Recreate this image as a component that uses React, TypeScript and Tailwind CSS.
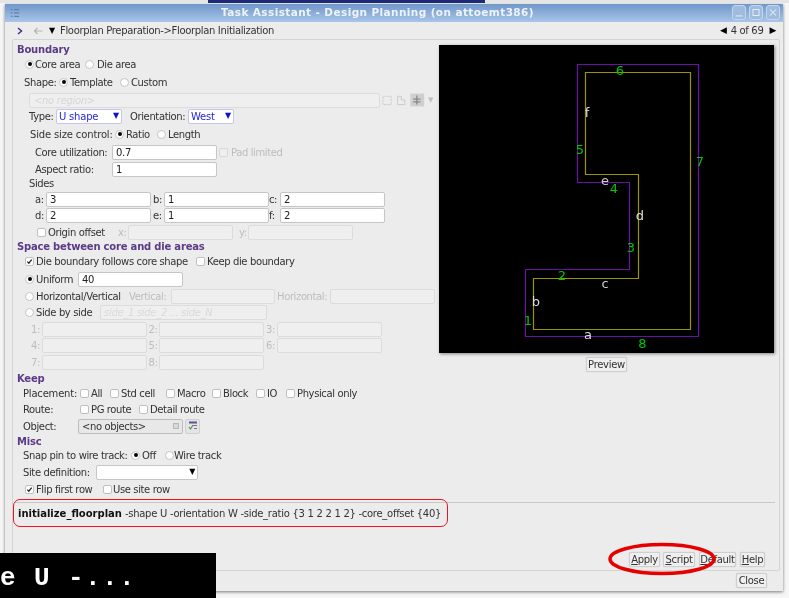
import React from "react";

const font = { fontFamily: '"DejaVu Sans", sans-serif' };

function Radio({ on = false, className = "" }: { on?: boolean; className?: string }) {
  return (
    <span className={`flex h-[9px] w-[9px] shrink-0 items-center justify-center rounded-full border border-[#c4c4c4] bg-white ${className}`}>
      {on && <span className="h-[4px] w-[4px] rounded-full bg-black" />}
    </span>
  );
}

function Check({ on = false, dim = false, className = "" }: { on?: boolean; dim?: boolean; className?: string }) {
  return (
    <span className={`flex h-[9px] w-[9px] shrink-0 items-center justify-center rounded-[2px] border ${dim ? "border-[#d8d8d8] bg-[#efefef]" : "border-[#c0c0c0] bg-white"} ${className}`}>
      {on && (
        <svg viewBox="0 0 8 8" className="h-[7px] w-[7px]">
          <path d="M1.5 4.2 L3.2 6 L6.5 1.8" fill="none" stroke="#222" strokeWidth="1.4" />
        </svg>
      )}
    </span>
  );
}

function Input({ value = "", dim = false, className = "" }: { value?: string; dim?: boolean; className?: string }) {
  return (
    <span className={`flex h-[15px] shrink-0 items-center rounded-[2px] border pl-[3px] text-[10px] tracking-[-0.3px] ${dim ? "border-[#dcdcdc] bg-[#efefef]" : "border-[#c6c6c6] bg-white text-[#222]"} ${className}`}>
      {value}
    </span>
  );
}

function Title({ children, className = "" }: { children: React.ReactNode; className?: string }) {
  return <div className={`flex h-[14px] items-center pl-[5px] text-[10px] font-bold tracking-[-0.2px] text-[#5b3a86] ${className}`}>{children}</div>;
}

function Row({ children, className = "" }: { children: React.ReactNode; className?: string }) {
  return <div className={`flex h-[14px] items-center whitespace-nowrap text-[10px] tracking-[-0.38px] text-[#333] ${className}`}>{children}</div>;
}

function Select({ value, className = "" }: { value: string; className?: string }) {
  return (
    <span className={`flex h-[15px] shrink-0 items-center justify-between rounded-[2px] border border-[#c5c5ee] bg-white px-[2px] text-[10px] tracking-[-0.2px] text-[#2525e0] ${className}`}>
      {value}
      <span className="text-[8px] text-[#1010d0]">▼</span>
    </span>
  );
}

function Btn({ label, u, rest, className = "" }: { label?: string; u?: string; rest?: string; className?: string }) {
  return (
    <span className={`flex h-[15px] items-center justify-center rounded-[2px] border border-[#cfcfcf] bg-[#efefef] text-[10px] tracking-[-0.3px] text-[#333] shadow-[0_0_1px_rgba(0,0,0,0.2)] ${className}`}>
      {u ? <u>{u}</u> : null}
      {rest}
      {label}
    </span>
  );
}

function Preview() {
  const labels: [string, number, number, string][] = [
    ["6", 620, 75, "#00c800"], ["7", 700, 166, "#00c800"], ["5", 580, 154, "#00c800"], ["4", 614, 193, "#00c800"],
    ["3", 631, 252, "#00c800"], ["2", 562, 280, "#00c800"], ["1", 528, 325, "#00c800"], ["8", 642.5, 348, "#00c800"],
    ["f", 587, 117, "#dddddd"], ["e", 605, 185, "#cccccc"], ["d", 640, 220, "#dddddd"], ["c", 605, 288, "#cccccc"],
    ["b", 536, 306, "#dddddd"], ["a", 588, 339, "#dddddd"],
  ];
  return (
    <svg viewBox="439 45 335 308" className="h-[308px] w-[335px] bg-black shadow-[1px_1px_3px_rgba(0,0,0,0.45)]">
      <path d="M525.5 336.5V269.5H629.5V182.5H577.5V64.5H698.5V336.5Z" fill="none" stroke="#6a10a8" strokeWidth="1.2" />
      <path d="M533.5 329.5V278.5H638.5V174.5H585.5V72.5H690.5V329.5Z" fill="none" stroke="#9a9400" strokeWidth="1.2" />
      {labels.map(([t, x, y, c]) => (
        <text key={t} x={x} y={y} fill={c} fontSize="13" textAnchor="middle" fontFamily="DejaVu Sans">{t}</text>
      ))}
    </svg>
  );
}

export default function App() {
  return (
    <div className="relative h-[598px] w-[789px] overflow-hidden bg-[#f6f6f6] blur-[0.4px]" style={font}>
      <div className="flex h-[3px]">
        <div className="w-[208px] bg-[#e4e4e4]" />
        <div className="w-[277px] bg-[#1c2a78]" />
        <div className="flex-1 bg-[#e4e4e4]" />
      </div>
      <div className="ml-[5px] mt-px flex h-[587px] w-[778px] flex-col bg-[#ececec] shadow-[0_1px_3px_rgba(0,0,0,0.5)]">
        {/* title bar */}
        <div className="relative flex h-[18px] shrink-0 items-center justify-center bg-gradient-to-b from-[#6f97c9] to-[#a9c5e8] text-[10.5px] font-bold tracking-[0.4px] text-[#eef3f9]">
          <svg viewBox="0 0 12 10" className="absolute left-[5px] top-[4px] h-[10px] w-[10px]">
            <path d="M1 1h2M1 5h2M1 9h2M5 1h6M5 5h6M5 9h6" stroke="#4a6a98" strokeWidth="1" fill="none" />
          </svg>
          <span className="ml-[-33px]">Task Assistant - Design Planning (on attoemt386)</span>
          <div className="absolute right-[3px] top-[1px] flex gap-[3px]">
            {["M3 11h8", "M3.5 3.5h7v7h-7z", "M3.5 3.5l7 7M10.5 3.5l-7 7"].map((d) => (
              <span key={d} className="flex h-[15px] w-[14px] items-center justify-center rounded-[3px] border border-[#c4d6ec] bg-[#9fbbde]">
                <svg viewBox="0 0 14 14" className="h-[13px] w-[13px]"><path d={d} stroke="#e4ecf6" strokeWidth="1.2" fill="none" /></svg>
              </span>
            ))}
          </div>
        </div>
        {/* nav */}
        <div className="flex h-[17px] shrink-0 items-center text-[10px] tracking-[-0.34px] text-[#333]">
          <svg viewBox="0 0 6 8" className="ml-[12px] h-[8px] w-[6px]"><path d="M1 1l3.5 3L1 7" stroke="#4a3088" strokeWidth="1.5" fill="none" /></svg>
          <svg viewBox="0 0 10 8" className="ml-[10px] h-[8px] w-[10px]"><path d="M9.5 4H1.5M4.5 1L1.5 4l3 3" stroke="#b4b4b4" strokeWidth="1.2" fill="none" /></svg>
          <span className="ml-[6px] w-[11px] text-[8px] text-black">▼</span>
          <span>Floorplan Preparation-&gt;Floorplan Initialization</span>
          <span className="ml-auto mr-[7px] flex items-center gap-[4px]">
            <span className="text-[9px] text-black">◀</span>
            <span>4 of 69</span>
            <span className="ml-[2px] text-[9px] text-black">▶</span>
          </span>
        </div>
        {/* panel */}
        <div className="ml-[7px] mr-[3px] flex h-[532px] flex-col rounded-[2px] border border-[#d4d4d4] bg-[#ececec]">
          <div className="flex h-[462px] shrink-0">
            <div className="ml-[-1px] mt-[2px] w-[426px] shrink-0">
              <Title>Boundary</Title>
              <Row className="mt-px pl-[13px]">
                <Radio on /><span className="ml-px w-[45px]">Core area</span>
                <Radio className="ml-[5px]" /><span className="ml-[3px]">Die area</span>
              </Row>
              <Row className="mt-1 pl-[12px]">
                <span className="w-[35px]">Shape:</span><Radio on /><span className="ml-[2px] w-[50px]">Template</span>
                <Radio /><span className="ml-[2px]">Custom</span>
              </Row>
              <Row className="mt-1 pl-[17px]">
                <Input dim value="<no region>" className="w-[351px] pl-[4px] italic text-[#d6d6d6]" />
                <svg viewBox="0 0 48 14" className="ml-[2px] h-[14px] w-[44px]">
                  <rect x="1" y="3" width="9" height="9" fill="none" stroke="#c8c8c8" strokeDasharray="2 1" />
                  <path d="M17 3h4v4h4v5h-8z" fill="none" stroke="#c8c8c8" />
                  <rect x="31" y="0" width="15" height="14" fill="#cfcfcf" />
                  <path d="M38 2v10M34 6h8M34 9h8" stroke="#8a8a8a" strokeWidth="1.5" />
                </svg>
                <span className="ml-[2px] text-[7px] text-[#c0c0c0]">▼</span>
              </Row>
              <Row className="mt-0.5 pl-[17px]">
                <span className="w-[27px]">Type:</span>
                <Select value="U shape" className="w-[66px]" />
                <span className="ml-[8px] w-[58px]">Orientation:</span>
                <Select value="West" className="w-[46px]" />
              </Row>
              <Row className="mt-1 pl-[18px]">
                <span className="w-[85px] tracking-[-0.15px]">Side size control:</span><Radio on /><span className="ml-[2px] w-[31px]">Ratio</span>
                <Radio /><span className="ml-[2px]">Length</span>
              </Row>
              <Row className="mt-1 pl-[23px]">
                <span className="w-[77px]">Core utilization:</span>
                <Input value="0.7" className="w-[105px]" />
                <Check dim className="ml-[2px]" /><span className="ml-[3px] text-[#bdbdbd]">Pad limited</span>
              </Row>
              <Row className="mt-[3px] pl-[23px]">
                <span className="w-[77px]">Aspect ratio:</span>
                <Input value="1" className="w-[105px]" />
              </Row>
              <Row className="pl-[17px]">Sides</Row>
              <Row className="mt-0.5 pl-[23px]">
                <span className="w-[11px]">a:</span><Input value="3" className="w-[105px]" />
                <span className="ml-[2px] w-[11px]">b:</span><Input value="1" className="w-[105px]" />
                <span className="w-[11px]">c:</span><Input value="2" className="w-[105px]" />
              </Row>
              <Row className="mt-0.5 pl-[23px]">
                <span className="w-[11px]">d:</span><Input value="2" className="w-[105px]" />
                <span className="ml-[2px] w-[11px]">e:</span><Input value="1" className="w-[105px]" />
                <span className="w-[11px]">f:</span><Input value="2" className="w-[105px]" />
              </Row>
              <Row className="mt-[3px] pl-[25px]">
                <Check /><span className="ml-[2px] w-[70px]">Origin offset</span>
                <span className="w-[10px] text-[#bdbdbd]">x:</span><Input dim className="w-[105px]" />
                <span className="ml-[6px] w-[9px] text-[#bdbdbd]">y:</span><Input dim className="w-[105px]" />
              </Row>
              <Title>Space between core and die areas</Title>
              <Row className="mt-px pl-[13px]">
                <Check on /><span className="ml-[2px] w-[160px]">Die boundary follows core shape</span>
                <Check /><span className="ml-[2px]">Keep die boundary</span>
              </Row>
              <Row className="mt-1 pl-[13px]">
                <Radio on /><span className="ml-[2px] w-[42px]">Uniform</span>
                <Input value="40" className="w-[105px]" />
              </Row>
              <Row className="mt-[3px] pl-[13px]">
                <Radio /><span className="ml-[2px] w-[93px]">Horizontal/Vertical</span>
                <span className="w-[42px] text-[#bdbdbd]">Vertical:</span><Input dim className="w-[104px]" />
                <span className="ml-[2px] w-[53px] text-[#bdbdbd]">Horizontal:</span><Input dim className="w-[105px]" />
              </Row>
              <Row className="mt-0.5 pl-[13px]">
                <Radio /><span className="ml-[2px] w-[64px]">Side by side</span>
                <Input dim value="side_1 side_2 ... side_N" className="w-[167px] italic text-[#dadada]" />
              </Row>
              {[["1:", "2:", "3:"], ["4:", "5:", "6:"], ["7:", "8:"]].map((r, i) => (
                <Row key={i} className={`${i === 1 ? "mt-0.5" : "mt-[3px]"} pl-[19px] text-[#bdbdbd]`}>
                  {r.map((l) => (
                    <React.Fragment key={l}>
                      <span className="w-[10.5px]">{l}</span>
                      <Input dim className="mr-[2px] w-[105px]" />
                    </React.Fragment>
                  ))}
                </Row>
              ))}
              <Title className="mt-0.5">Keep</Title>
              <Row className="mt-px pl-[11px]">
                <span className="w-[57px] tracking-[-0.2px]">Placement:</span>
                <Check /><span className="ml-[2px] w-[19px]">All</span>
                <Check /><span className="ml-[2px] w-[45px]">Std cell</span>
                <Check /><span className="ml-[2px] w-[35px]">Macro</span>
                <Check /><span className="ml-[2px] w-[33px]">Block</span>
                <Check /><span className="ml-[2px] w-[19px]">IO</span>
                <Check /><span className="ml-[2px]">Physical only</span>
              </Row>
              <Row className="mt-0.5 pl-[11px]">
                <span className="w-[57px]">Route:</span>
                <Check /><span className="ml-[2px] w-[48px]">PG route</span>
                <Check /><span className="ml-[2px]">Detail route</span>
              </Row>
              <Row className="mt-[3px] pl-[11px]">
                <span className="w-[55px]">Object:</span>
                <span className="flex h-[15px] w-[105px] items-center justify-between rounded-[2px] border border-[#bcbcbc] bg-[#e8e8e8] px-[3px]">
                  &lt;no objects&gt;
                  <span className="h-[6px] w-[6px] border border-[#b8b8b8] bg-[#d8d8d8]" />
                </span>
                <span className="ml-[2px] flex h-[15px] w-[15px] items-center justify-center rounded-[2px] border border-[#cfcfcf] bg-[#e4e4e4]">
                  <svg viewBox="0 0 10 10" className="h-[10px] w-[10px]">
                    <path d="M1 1.5h8" stroke="#6a4a9a" strokeWidth="2" />
                    <path d="M5 4.5h4M6 7.5h3" stroke="#7a6aa0" strokeWidth="1.2" />
                    <path d="M1 6l1.5 2L5 4" stroke="#40a040" strokeWidth="1.2" fill="none" />
                  </svg>
                </span>
              </Row>
              <Title className="mt-px">Misc</Title>
              <Row className="pl-[11px]">
                <span className="w-[108px]">Snap pin to wire track:</span><Radio on /><span className="ml-[2px] w-[23px]">Off</span>
                <Radio /><span>Wire track</span>
              </Row>
              <Row className="mt-[3px] pl-[11px]">
                <span className="w-[73px]">Site definition:</span>
                <span className="flex h-[15px] w-[102px] items-center justify-end rounded-[2px] border border-[#c6c6c6] bg-white pr-[2px]">
                  <span className="text-[8px] text-black">▼</span>
                </span>
              </Row>
              <Row className="mt-[3px] pl-[13px]">
                <Check on /><span className="ml-[2px] w-[67px]">Flip first row</span>
                <Check /><span className="ml-px">Use site row</span>
              </Row>
            </div>
            <div className="ml-px mt-[5px] flex w-[335px] shrink-0 flex-col items-center">
              <Preview />
              <Btn label="Preview" className="mt-[4px] w-[41px]" />
            </div>
          </div>
          <div className="ml-px mr-[4px] h-px shrink-0 bg-[#c8c8c8]" />
          <div className="flex h-[20px] shrink-0 items-center whitespace-nowrap pl-[5px] text-[10px] tracking-[-0.28px] text-[#333]">
            <b className="tracking-normal text-[#111]">initialize_floorplan</b>
            <span className="ml-[3px]">-shape U -orientation W -side_ratio {"{3 1 2 2 1 2}"} -core_offset {"{40}"}</span>
          </div>
          <div className="mr-[14px] mt-[29px] flex justify-end gap-[3px]">
            <Btn u="A" rest="pply" className="w-[31px]" />
            <Btn u="S" rest="cript" className="w-[32px]" />
            <Btn u="D" rest="efault" className="ml-px w-[37px]" />
            <Btn u="H" rest="elp" className="ml-px w-[25px]" />
          </div>
        </div>
        <div className="mr-[16px] mt-[2px] flex justify-end">
          <Btn label="Close" className="w-[31px]" />
        </div>
      </div>

      {/* annotations */}
      <div className="absolute left-[13px] top-[499px] h-[28px] w-[435px] rounded-[7px] border-[1.5px] border-[#ee1420]" />
      <svg className="absolute left-[600px] top-[535px] h-[50px] w-[125px]" viewBox="0 0 125 50">
        <ellipse cx="62" cy="24" rx="52" ry="14.5" fill="none" stroke="#e60000" strokeWidth="3.5" />
      </svg>
      <div className="absolute bottom-0 left-0 flex h-[45px] w-[216px] items-center overflow-hidden bg-black pt-[5px] text-[26px] font-bold tracking-[1.4px] text-white" style={{ fontFamily: '"Liberation Mono", monospace' }}>
        <span className="whitespace-pre">e U -...</span>
      </div>
    </div>
  );
}
